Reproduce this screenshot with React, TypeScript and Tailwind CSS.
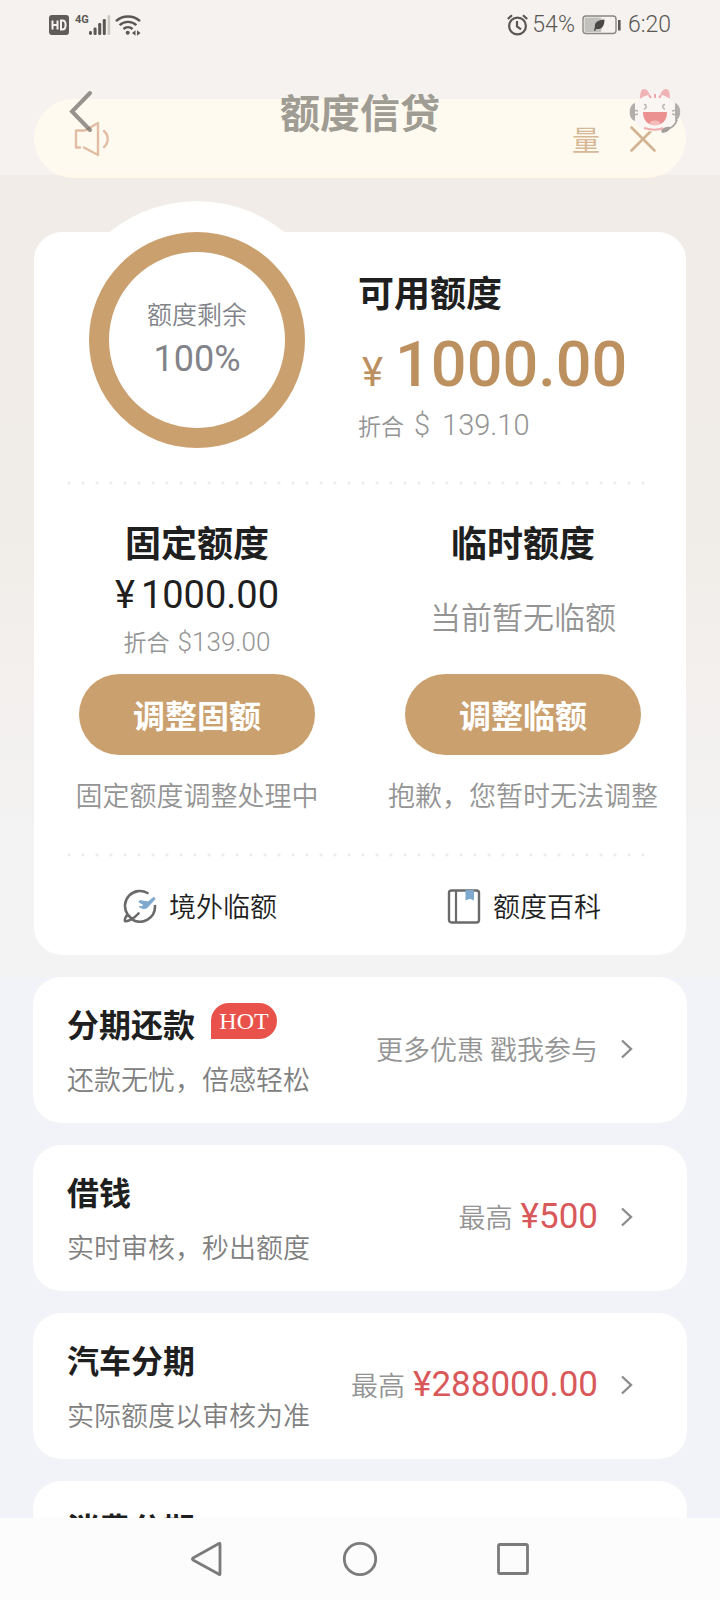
import type { ReactNode } from 'react';

interface Product {
  title: string;
  desc: string;
  hot?: boolean;
  hint?: string;
  amount?: string;
}

const products: Product[] = [
  { title: '分期还款', desc: '还款无忧，倍感轻松', hot: true, hint: '更多优惠 戳我参与' },
  { title: '借钱', desc: '实时审核，秒出额度', hint: '最高', amount: '¥500' },
  { title: '汽车分期', desc: '实际额度以审核为准', hint: '最高', amount: '¥288000.00' },
  { title: '消费分期', desc: '' },
];

function StatusBar() {
  return (
    <div className="flex h-[50px] items-center justify-between px-[49px] text-[#5a5855]">
      <div className="flex items-center">
        <svg className="h-5 w-5" viewBox="0 0 20 20" aria-label="HD">
          <rect width="20" height="20" rx="3" fill="#5f5d59" />
          <path
            d="M3.5 5.5v9M8.5 5.5v9M3.5 10h5M12 5.500v9h1.400c2.200 0 3.200-1.700 3.200-4.500s-1-4.500-3.200-4.500z"
            fill="none"
            stroke="#f6f2ef"
            strokeWidth="2"
          />
        </svg>
        <span className="ml-1.5 self-start font-['Roboto',sans-serif] text-[11px] leading-[10px] font-bold">4G</span>
        <svg className="h-5 w-[22px]" viewBox="0 0 22 20" fill="currentColor" aria-hidden="true">
          <rect x="0" y="16" width="3" height="4" rx="1.4" />
          <rect x="4.6" y="12.5" width="3" height="7.5" rx="1.2" />
          <rect x="9.2" y="8" width="3" height="12" rx="1.2" />
          <rect x="13.8" y="4" width="3" height="16" rx="1.2" />
          <rect x="18.6" y="0" width="2.6" height="20" rx="1.2" fill="#cbc8c4" />
        </svg>
        <svg className="ml-1 h-[21px] w-[26px]" viewBox="0 0 26 21" fill="none" stroke="currentColor" strokeWidth="2.4" aria-hidden="true">
          <path d="M1 6.2C7.5 0 18.500 0 25 6.2" />
          <path d="M4.6 10.2c4.8-4.4 12-4.4 16.8 0" />
          <path d="M8.4 14c2.7-2.4 6.500-2.4 9.2 0" />
          <circle cx="12.7" cy="17.7" r="2" fill="currentColor" stroke="none" />
          <path d="M17 18l3.5-2.800v5.600zM25.500 18L22 15.200v5.600z" fill="currentColor" stroke="none" />
        </svg>
      </div>
      <div className="flex items-center font-['Roboto',sans-serif] text-[23px] leading-[30px] font-light">
        <svg className="mr-1 h-[22px] w-[21px]" viewBox="0 0 21 22" fill="none" stroke="currentColor" strokeWidth="2.2" aria-hidden="true">
          <circle cx="10.5" cy="12" r="8.4" />
          <path d="M10 7v5.5l4 2.8M.8 5L5 1.2M20.2 5L16 1.2" />
        </svg>
        54%
        <svg className="mx-[7px] h-5 w-[39px]" viewBox="0 0 39 20" aria-hidden="true">
          <rect x="1" y="1" width="33" height="17.5" rx="3" fill="none" stroke="#8a8884" strokeWidth="1.4" />
          <rect x="2.5" y="2.5" width="17" height="14.5" rx="1.5" fill="#c3c1be" />
          <path d="M22.5 4.5c-7 .5-10 3-9.6 7.5l-1 3.500 1.200.4 1-1.900c5.500.8 8.300-2.500 8.400-9.500z" fill="#4b4947" />
          <rect x="36" y="5" width="2.6" height="10.5" fill="#5a5855" />
        </svg>
        6:20
      </div>
    </div>
  );
}

function Mascot() {
  return (
    <svg className="h-[46px] w-[54px]" viewBox="0 0 54 46" aria-hidden="true">
      <path d="M12 11c0-6 1-10 4-10s5 3 6 7zM42 11c0-6-1-10-4-10s-5 3-6 7z" fill="#f0b3b5" />
      <ellipse cx="27" cy="25" rx="22.5" ry="19" fill="#faf6f4" />
      <path d="M21 7l2 3M27 6v4M33 7l-2 3" stroke="#efa5a9" strokeWidth="2" />
      <path d="M7 15C0 17 0 31 7 33zM47 15c7 2 7 16 0 18z" fill="#b1aeab" />
      <path d="M49 32c-2 6-7 9-12 10" fill="none" stroke="#a8a5a2" strokeWidth="1.8" />
      <path d="M33 42c2-2 6-4 9-3 1 2-3 6-8 6z" fill="#a39f9c" />
      <path d="M16 16.5c3 0 3 4 0 4.5M37 16.5c-3 0-3 4 0 4.5M5 22l5 1M6 27l4-1M49 22l-5 1M48 27l-4-1" fill="none" stroke="#b5b1ad" strokeWidth="1.3" />
      <path d="M15 24h24c0 9-5 13-12 13s-12-4-12-13z" fill="#ec9192" />
      <ellipse cx="27" cy="35" rx="5" ry="2.5" fill="#f5bdb9" />
      <path d="M16 40c7 2 15 2 19 0" fill="none" stroke="#f0acaa" strokeWidth="2" />
    </svg>
  );
}

function Header() {
  return (
    <header className="absolute inset-x-0 top-0 z-10 h-[175px] bg-white/35">
      <StatusBar />
      <div className="grid grid-cols-[1fr_auto_1fr] items-center px-[38px] pt-[31px]">
        <button type="button" aria-label="返回" className="ml-[30px] justify-self-start">
          <svg className="h-[44px] w-[26px]" viewBox="0 0 26 44" fill="none" stroke="#6b6864" strokeOpacity=".7" strokeWidth="4" strokeLinecap="round" aria-hidden="true">
            <path d="M22 4L4 22.500 22 41" />
          </svg>
        </button>
        <h1 className="text-[40px] leading-[60px] font-bold text-[#9f9c94]">额度信贷</h1>
        <button type="button" aria-label="客服" className="justify-self-end">
          <Mascot />
        </button>
      </div>
    </header>
  );
}

function Notice() {
  return (
    <div className="mx-[34px] flex h-[79px] items-center rounded-full bg-[#fff8e8] pr-[29px] pl-[40px] text-[28px] text-[#c0925f]">
      <svg className="h-[36px] w-[37px]" viewBox="0 0 37 36" fill="none" stroke="#cf9a72" strokeWidth="2.4" strokeLinecap="round" strokeLinejoin="round" aria-hidden="true">
        <path d="M6 26.5H2V9.5h9L24 2v32l-14-7.500" />
        <path d="M30 10c5 4.500 5 11.500 0 16" />
      </svg>
      <p className="flex-1 text-right">量</p>
      <button type="button" aria-label="关闭" className="ml-[29px]">
        <svg className="h-[28px] w-[28px]" viewBox="0 0 28 28" fill="none" stroke="#b98a58" strokeWidth="2.6" strokeLinecap="round" aria-hidden="true">
          <path d="M2.5 2.5l23 23M25.5 2.5l-23 23" />
        </svg>
      </button>
    </div>
  );
}

function Divider() {
  return (
    <div className="mr-[34px] ml-[28px] h-1 bg-[radial-gradient(circle,#ececec_1px,transparent_2px)] bg-[length:14px_4px]" />
  );
}

function QuotaRing() {
  return (
    <div className="-mt-[31px] ml-[24px] h-[278px] w-[278px] shrink-0 rounded-full bg-white p-[31px]">
      <div className="flex h-full flex-col items-center justify-center gap-0.5 rounded-full border-[20px] border-[#cba06f] pb-1 text-[#828389]">
        <span className="text-[25px] leading-[40px] font-[350]">额度剩余</span>
        <span className="font-['Roboto',sans-serif] text-[36px] leading-[48px]">100%</span>
      </div>
    </div>
  );
}

interface QuotaColumnProps {
  title: string;
  action: string;
  note: string;
  children: ReactNode;
}

function QuotaColumn({ title, action, note, children }: QuotaColumnProps) {
  return (
    <div className="flex flex-col items-center">
      <h2 className="mb-1 text-[36px] leading-[48px] font-bold">{title}</h2>
      {children}
      <button
        type="button"
        className="mt-[11px] h-[81px] w-[236px] rounded-full bg-[#cba06f] pb-0.5 text-[32px] font-bold text-white"
      >
        {action}
      </button>
      <p className="mt-5 text-[27px] leading-[40px] font-[350] whitespace-nowrap text-[#949494]">{note}</p>
    </div>
  );
}

function OverseasIcon() {
  return (
    <svg className="h-[34px] w-[34px]" viewBox="0 0 34 34" fill="none" strokeLinecap="round" strokeLinejoin="round" aria-hidden="true">
      <path
        d="M24.500 4A15 15 0 0 0 4.500 25.300C2.500 28 1.300 30.500 2 32c2.500 1 8.500-2 13.500-7.500M4.500 25.300L9 30M9 30.300A15 15 0 0 0 32 17"
        stroke="#6a6a6a"
        strokeWidth="2.6"
      />
      <path
        d="M30.500 8.500l-5.500 4.500-8-1.400-1.200 1.300 5.300 3-2.300 1.700-2.600.2 4 1.800 3.500-.6 8-8.500c.6-1-.2-2.500-1.200-2z"
        fill="#7fa8cf"
        stroke="#7fa8cf"
      />
    </svg>
  );
}

function BookIcon() {
  return (
    <svg className="h-[35px] w-[34px]" viewBox="0 0 34 35" fill="none" aria-hidden="true">
      <rect x="2" y="1.5" width="30" height="32" rx="2.5" stroke="#6a6a6a" strokeWidth="2.4" />
      <path d="M9 2v31" stroke="#6a6a6a" strokeWidth="2.2" />
      <path d="M18.5 1H27v10.500l-4.200-1.700-4.300 1.700z" fill="#7fa8cf" />
    </svg>
  );
}

function QuotaCard() {
  return (
    <section className="mx-[34px] mt-[54px] rounded-[28px] bg-white pb-7 text-[#1f1f1f]">
      <div className="flex items-start">
        <QuotaRing />
        <div className="ml-[22px] pt-[35px] whitespace-nowrap">
          <h2 className="text-[36px] leading-[48px] font-bold">可用额度</h2>
          <p className="mt-2.5 flex h-[80px] items-baseline gap-3 font-['Roboto',sans-serif] text-[63px] leading-[80px] font-medium text-[#bd9060]">
            <span className="ml-1 text-[40px] font-normal">¥</span>
            1000.00
          </p>
          <p className="flex h-[40px] items-baseline text-[23px] leading-[40px] font-[350] text-[#949494]">
            折合
            <span className="ml-2.5 font-['Roboto',sans-serif] text-[29px] font-light">$</span>
            <span className="ml-3 font-['Roboto',sans-serif] text-[29px] font-light">139.10</span>
          </p>
        </div>
      </div>
      <div className="mt-0.5">
        <Divider />
      </div>
      <div className="mt-8 grid grid-cols-2">
        <QuotaColumn title="固定额度" action="调整固额" note="固定额度调整处理中">
          <p className="flex h-[52px] items-baseline gap-1.5 font-['Roboto',sans-serif] text-[38px] leading-[52px]">
            <span>¥</span>
            <span>1000.00</span>
          </p>
          <p className="flex h-[42px] items-baseline gap-2 text-[23px] leading-[40px] font-[350] text-[#949494]">
            折合
            <span className="font-['Roboto',sans-serif] text-[26px] font-light">$139.00</span>
          </p>
        </QuotaColumn>
        <QuotaColumn title="临时额度" action="调整临额" note="抱歉，您暂时无法调整">
          <p className="text-[31px] leading-[94px] font-[350] text-[#949494]">当前暂无临额</p>
        </QuotaColumn>
      </div>
      <div className="mt-[38px]">
        <Divider />
      </div>
      <div className="mt-[29px] grid grid-cols-2 pb-px pl-1 text-[27px] leading-[40px] font-[350]">
        <a href="#overseas" className="flex items-center justify-center gap-3">
          <OverseasIcon />
          境外临额
        </a>
        <a href="#wiki" className="flex items-center justify-center gap-3">
          <BookIcon />
          额度百科
        </a>
      </div>
    </section>
  );
}

function ProductCard({ title, desc, hot, hint, amount }: Product) {
  return (
    <a
      href="#product"
      className="flex min-h-[146px] items-start rounded-[28px] bg-white pt-[22px] pr-[54px] pb-[24px] pl-[34px] whitespace-nowrap"
    >
      <div className="flex-1">
        <div className="flex items-start">
          <h3 className="text-[32px] leading-[48px] font-bold text-[#1f1f1f]">{title}</h3>
          {hot && (
            <span className="mt-1 ml-4 h-9 w-[66px] rounded-t-[18px] rounded-br-[18px] bg-[#e9524a] text-center font-['Liberation_Serif',serif] text-[24px] leading-[37px] text-white">
              HOT
            </span>
          )}
        </div>
        {desc && <p className="mt-3 text-[27px] leading-[40px] font-[350] text-[#808080]">{desc}</p>}
      </div>
      {hint && (
        <div className="flex h-[100px] items-center">
          <p className="flex h-[40px] items-baseline gap-2 text-[27px] leading-[40px] font-[350] text-[#949494]">
            {hint}
            {amount && (
              <span className="font-['Roboto',sans-serif] text-[35px] font-normal text-[#d9595a]">{amount}</span>
            )}
          </p>
          <svg className="ml-[22px] h-5 w-[13px]" viewBox="0 0 13 20" fill="none" stroke="#8c8c8c" strokeWidth="2.4" aria-hidden="true">
            <path d="M2 1.5l9 8.500-9 8.500" />
          </svg>
        </div>
      )}
    </a>
  );
}

function SystemNav() {
  return (
    <nav className="z-10 grid h-[82px] shrink-0 grid-cols-[1fr_153px_1fr] items-center bg-[#fcfcfc] text-[#7b7b7b]">
      <button type="button" aria-label="后退" className="mr-[62px] justify-self-end">
        <svg className="h-9 w-8" viewBox="0 0 32 36" fill="none" stroke="currentColor" strokeWidth="2.8" strokeLinejoin="round" aria-hidden="true">
          <path d="M30 3v30q0 1-1 .3L3 19q-1.200-1 0-2L29 2.500q1-.6 1 .5z" />
        </svg>
      </button>
      <button type="button" aria-label="主页" className="justify-self-center">
        <svg className="h-9 w-9" viewBox="0 0 36 36" fill="none" stroke="currentColor" strokeWidth="2.8" aria-hidden="true">
          <circle cx="18" cy="18" r="15.7" />
        </svg>
      </button>
      <button type="button" aria-label="最近任务" className="ml-[58px] justify-self-start">
        <svg className="h-9 w-9" viewBox="0 0 36 36" fill="none" stroke="currentColor" strokeWidth="2.8" aria-hidden="true">
          <rect x="3.5" y="3.5" width="29" height="29" rx="1.5" />
        </svg>
      </button>
    </nav>
  );
}

export default function App() {
  return (
    <div className="relative flex h-screen flex-col bg-[#f2f3f8] font-['Noto_Sans_CJK_SC',sans-serif]">
      <Header />
      <main className="min-h-0 flex-1 overflow-hidden">
        <div className="bg-[linear-gradient(#f1ece7_0%,#f0ece7_52%,#f3efed_66%,#f3f3f3_88%)] pt-[99px] pb-[22px]">
          <Notice />
          <QuotaCard />
        </div>
        <div className="mx-[33px] flex flex-col gap-[22px]">
          {products.map((product) => (
            <ProductCard key={product.title} {...product} />
          ))}
        </div>
      </main>
      <SystemNav />
    </div>
  );
}
